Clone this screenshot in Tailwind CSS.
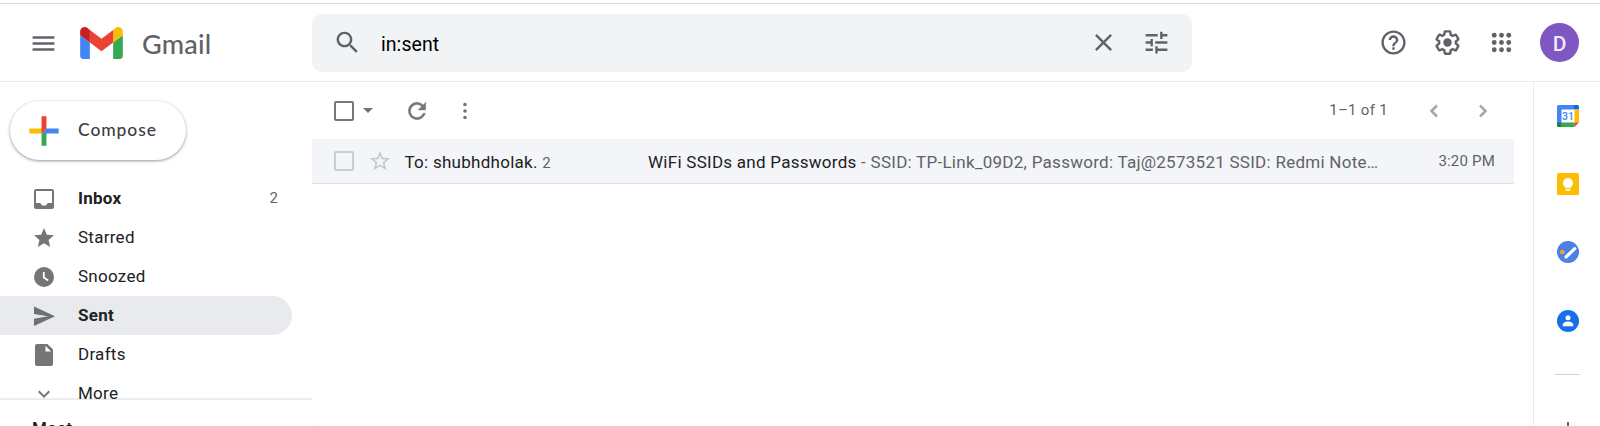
<!DOCTYPE html>
<html lang="en">
<head>
<meta charset="utf-8">
<title>Gmail</title>
<script src="https://cdn.jsdelivr.net/npm/@tailwindcss/browser@4"></script>
</head>
<body class="flex h-[426px] w-[1600px] flex-col overflow-hidden bg-white pt-[3px] font-['Roboto',sans-serif] text-[#202124]">
<header class="flex h-[79px] shrink-0 items-center border-t border-b border-t-[#d5d6d8] border-b-[#ececee]">
  <div class="flex w-[312px] items-center pt-px pl-[29px]">
    <svg class="size-[29px] text-[#5f6368]" viewBox="0 0 24 24" fill="currentColor"><path d="M3 18h18v-2H3v2zm0-5h18v-2H3v2zm0-7v2h18V6H3z"/></svg>
    <svg class="ml-[22px] h-[32px] w-[43px]" viewBox="52 42 88 66"><path fill="#4285f4" d="M58 108h14V74L52 59v43c0 3.32 2.69 6 6 6"/><path fill="#34a853" d="M120 108h14c3.32 0 6-2.69 6-6V59l-20 15"/><path fill="#fbbc04" d="M120 48v26l20-15v-8c0-7.42-8.47-11.65-14.4-7.2"/><path fill="#ea4335" d="M72 74V48l24 18 24-18v26L96 92"/><path fill="#c5221f" d="M52 51v8l20 15V48l-5.6-4.2c-5.94-4.45-14.4-.22-14.4 7.2"/></svg>
    <span class="ml-[19px] pt-px font-['Lato',sans-serif] text-[27px] font-medium leading-none tracking-[0.2px] text-[#5f6368]">Gmail</span>
  </div>
  <div class="flex h-[58px] w-[880px] items-center rounded-[10px] bg-[#f1f3f4] pl-[21px] pr-[21px] text-[#5f6368]">
    <svg class="size-[29px]" viewBox="0 0 24 24" fill="currentColor"><path d="M15.5 14h-.79l-.28-.27C15.41 12.59 16 11.11 16 9.5 16 5.91 13.09 3 9.5 3S3 5.91 3 9.5 5.91 16 9.5 16c1.61 0 3.09-.59 4.23-1.57l.27.28v.79l5 4.99L20.49 19l-4.99-5zm-6 0C7.01 14 5 11.99 5 9.5S7.01 5 9.5 5 14 7.01 14 9.5 11.99 14 9.5 14z"/></svg>
    <span class="ml-[19px] flex-1 pt-[4px] text-[19.5px] leading-none tracking-[0.05px] text-black">in:sent</span>
    <svg class="size-[29px]" viewBox="0 0 24 24" fill="currentColor"><path d="M19 6.41L17.59 5 12 10.59 6.41 5 5 6.41 10.59 12 5 17.59 6.41 19 12 13.41 17.59 19 19 17.59 13.41 12z"/></svg>
    <svg class="ml-[24px] size-[29px]" viewBox="0 0 24 24" fill="currentColor"><path d="M3 17v2h6v-2H3zM3 5v2h10V5H3zm10 16v-2h8v-2h-8v-2h-2v6h2zM7 9v2H3v2h4v2h2V9H7zm14 4v-2H11v2h10zm-6-4h2V7h4V5h-4V3h-2v6z"/></svg>
  </div>
  <div class="ml-auto flex items-center gap-[25px] pr-[21px] text-[#5f6368]">
    <svg class="size-[29px]" viewBox="0 0 24 24" fill="currentColor"><path d="M11 18h2v-2h-2v2zm1-16C6.48 2 2 6.48 2 12s4.48 10 10 10 10-4.48 10-10S17.52 2 12 2zm0 18c-4.41 0-8-3.59-8-8s3.59-8 8-8 8 3.59 8 8-3.59 8-8 8zm0-14c-2.21 0-4 1.79-4 4h2c0-1.1.9-2 2-2s2 .9 2 2c0 2-3 1.75-3 5h2c0-2.250 3-2.500 3-5 0-2.210-1.790-4-4-4z"/></svg>
    <svg class="size-[29px]" viewBox="0 0 24 24" fill="currentColor"><path d="M13.850 22.250h-3.700c-.740 0-1.360-.540-1.450-1.270l-.270-1.890c-.270-.140-.530-.290-.790-.460l-1.800.720c-.700.260-1.470-.030-1.810-.650L2.200 15.530c-.350-.660-.200-1.440.360-1.880l1.530-1.190c-.010-.150-.020-.300-.020-.460 0-.150.010-.310.020-.460l-1.520-1.190c-.590-.450-.740-1.260-.370-1.880l1.850-3.190c.340-.620 1.110-.900 1.790-.630l1.810.730c.260-.170.520-.320.780-.460l.270-1.910c.090-.700.710-1.250 1.440-1.250h3.700c.740 0 1.360.540 1.450 1.270l.270 1.890c.270.140.530.290.790.460l1.800-.720c.710-.260 1.480.030 1.820.650l1.840 3.180c.360.660.200 1.440-.360 1.880l-1.520 1.190c.010.150.020.300.020.460s-.010.310-.020.460l1.520 1.190c.560.450.720 1.230.370 1.860l-1.860 3.220c-.340.620-1.110.900-1.800.630l-1.800-.720c-.260.170-.520.320-.780.460l-.270 1.910c-.100.680-.720 1.220-1.460 1.220zm-3.230-2h2.760l.370-2.550.530-.220c.440-.180.880-.440 1.340-.780l.450-.340 2.380.960 1.380-2.400-2.030-1.580.070-.560c.030-.260.060-.510.060-.780s-.030-.530-.060-.780l-.070-.560 2.030-1.580-1.390-2.400-2.390.960-.450-.350c-.420-.320-.870-.580-1.330-.770l-.520-.220-.370-2.550h-2.760l-.370 2.550-.530.210c-.440.190-.880.440-1.340.790l-.450.330-2.380-.950-1.390 2.390 2.030 1.580-.070.560a7 7 0 0 0-.060.790c0 .260.020.530.060.780l.070.560-2.030 1.580 1.380 2.400 2.390-.960.450.350c.430.330.860.580 1.330.770l.530.220.380 2.550z"/><circle cx="12" cy="12" r="3.500"/></svg>
    <svg class="size-[29px]" viewBox="0 0 24 24" fill="currentColor"><circle cx="6" cy="6" r="2"/><circle cx="12" cy="6" r="2"/><circle cx="18" cy="6" r="2"/><circle cx="6" cy="12" r="2"/><circle cx="12" cy="12" r="2"/><circle cx="18" cy="12" r="2"/><circle cx="6" cy="18" r="2"/><circle cx="12" cy="18" r="2"/><circle cx="18" cy="18" r="2"/></svg>
    <div class="-ml-[1px] flex size-[39px] items-center justify-center rounded-full bg-[#7e57c2] pt-[3px] text-[21px] font-medium leading-none text-[#f0e8f8]">D</div>
  </div>
</header>

<div class="flex min-h-0 flex-1">
  <aside class="flex w-[312px] flex-col">
    <div class="pt-[19px] pl-[10px]">
      <button class="flex h-[59px] w-[176px] items-center rounded-full bg-white pl-[12px] shadow-[0_1px_2px_0_rgba(60,64,67,0.35),0_1px_3px_1px_rgba(60,64,67,0.16)]">
        <svg class="size-[44px]" viewBox="0 0 36 36"><path fill="#34A853" d="M16 16v14h4V20z"/><path fill="#4285F4" d="M30 16H20l-4 4h14z"/><path fill="#FBBC05" d="M6 16v4h10l4-4z"/><path fill="#EA4335" d="M20 16V6h-4v14z"/></svg>
        <span class="ml-[12px] pb-[2px] font-['Lato',sans-serif] text-[17.5px] font-medium leading-none tracking-[0.9px] text-[#3c4043]">Compose</span>
      </button>
    </div>
    <nav class="mt-[19px] h-[220px] shrink-0 overflow-hidden text-[17px] leading-none tracking-[0.27px]">
      <div class="flex h-[39px] items-center pr-[34px] pl-[32px] font-bold">
        <svg class="size-[24px] text-[#757575]" viewBox="0 0 24 24" fill="currentColor"><path fill-rule="evenodd" d="M4 2h16a2 2 0 0 1 2 2v16a2 2 0 0 1-2 2H4a2 2 0 0 1-2-2V4a2 2 0 0 1 2-2zm0 2v12h4.300a3.900 3.900 0 0 0 7.400 0H20V4z"/></svg>
        <span class="ml-[22px] flex-1">Inbox</span><span class="text-[15px] font-normal tracking-normal text-[#5f6368]">2</span>
      </div>
      <div class="flex h-[39px] items-center pl-[32px]">
        <svg class="size-[24px] text-[#757575]" viewBox="0 0 24 24" fill="currentColor"><path d="M12 17.270L18.180 21l-1.640-7.030L22 9.240l-7.190-.610L12 2 9.190 8.630 2 9.240l5.460 4.730L5.820 21z"/></svg>
        <span class="ml-[22px]">Starred</span>
      </div>
      <div class="flex h-[39px] items-center pl-[32px]">
        <svg class="size-[24px] text-[#757575]" viewBox="0 0 24 24"><circle cx="12" cy="12" r="10" fill="currentColor"/><path d="M11.800 7v5.500l4.400 3" fill="none" stroke="#fff" stroke-width="1.800"/></svg>
        <span class="ml-[22px]">Snoozed</span>
      </div>
      <div class="flex h-[39px] w-[292px] items-center rounded-r-full bg-[#e8eaed] pl-[32px] font-bold">
        <svg class="size-[24px] text-[#6f7072]" viewBox="0 0 24 24" fill="currentColor"><path d="M2 22l21-9.700L2 2.500v7.400l14 2.400-14 2.400z"/></svg>
        <span class="ml-[22px]">Sent</span>
      </div>
      <div class="flex h-[39px] items-center pl-[32px]">
        <svg class="size-[24px] text-[#757575]" viewBox="0 0 24 24" fill="currentColor"><path fill-rule="evenodd" d="M5 1h10.500L21 6.500V21a2 2 0 0 1-2 2H5a2 2 0 0 1-2-2V3a2 2 0 0 1 2-2zm8.500 1.800V8.500h5.500z"/></svg>
        <span class="ml-[22px]">Drafts</span>
      </div>
      <div class="flex h-[39px] items-center pl-[32px]">
        <svg class="size-[24px] text-[#757575]" viewBox="0 0 24 24" fill="currentColor"><path d="M16.590 8.590L12 13.170 7.410 8.590 6 10l6 6 6-6z"/></svg>
        <span class="ml-[22px]">More</span>
      </div>
    </nav>
    <section class="h-[40px] shrink-0 border-t border-[#e9eaeb] pt-[20px] pl-[32px] text-[17px] font-medium leading-none tracking-[0.5px] shadow-[0_-1px_1px_rgba(60,64,67,0.08)]">Meet</section>
  </aside>

  <main class="w-[1221px]">
    <div class="flex h-[57px] items-center pl-[22px] text-[#757575]">
      <span class="size-[20px] rounded-[2px] border-2 border-[#777]"></span>
      <svg class="ml-[9px] h-[5px] w-[10px]" viewBox="0 0 10 5" fill="currentColor"><path d="M0 0h10L5 5z"/></svg>
      <svg class="ml-[31px] size-[26px]" viewBox="0 0 24 24" fill="currentColor" stroke="currentColor" stroke-width=".4"><path d="M17.650 6.350A7.960 7.960 0 0 0 12 4a8 8 0 1 0 7.730 10h-2.080A6 6 0 1 1 12 6c1.660 0 3.140.690 4.220 1.780L13 11h7V4z"/></svg>
      <svg class="ml-[18px] size-[24px]" viewBox="0 0 24 24" fill="currentColor"><circle cx="17" cy="5.500" r="1.800"/><circle cx="17" cy="12" r="1.800"/><circle cx="17" cy="18.500" r="1.800"/></svg>
      <span class="ml-auto text-[15px] leading-none tracking-[0.3px] text-[#5f6368]">1–1 of 1</span>
      <svg class="ml-[34px] size-[24px] text-[#a8a8a8]" viewBox="0 0 24 24" fill="none" stroke="currentColor" stroke-width="2.600"><path d="M15 6.500L9.500 12l5.500 5.500"/></svg>
      <svg class="mr-[38px] ml-[25px] size-[24px] text-[#a8a8a8]" viewBox="0 0 24 24" fill="none" stroke="currentColor" stroke-width="2.600"><path d="M9 6.500l5.500 5.500L9 17.500"/></svg>
    </div>
    <div class="flex h-[45px] w-[1202px] items-center border-b border-[#dfe2e5] bg-[#f4f5f8] pr-[19px] pl-[22px] text-[17px] leading-none">
      <span class="size-[20px] shrink-0 rounded-[2px] border-2 border-[#cbcccf]"></span>
      <svg class="ml-[14px] size-[24px] shrink-0 text-[#c6c8ca]" viewBox="0 0 24 24" fill="currentColor"><path d="M22 9.240l-7.190-.620L12 2 9.190 8.630 2 9.240l5.460 4.730L5.820 21 12 17.270 18.180 21l-1.630-7.030zM12 15.400l-3.760 2.270 1-4.280-3.320-2.880 4.380-.380L12 6.100l1.710 4.040 4.380.380-3.320 2.880 1 4.280z"/></svg>
      <div class="ml-[12.500px] w-[243.500px] shrink-0 pt-[2px] whitespace-nowrap tracking-[0.27px]">To: shubhdholak. <span class="text-[15px] text-[#5f6368]">2</span></div>
      <div class="flex-1 pt-[2px] whitespace-nowrap tracking-[0.265px] text-[#5f6368]"><span class="text-[#202124]">WiFi SSIDs and Passwords</span> - SSID: TP-Link_09D2, Password: Taj@2573521 SSID: Redmi Note…</div>
      <div class="pt-px text-[15px] whitespace-nowrap tracking-[0.2px] text-[#5f6368]">3:20 PM</div>
    </div>
  </main>

  <aside class="flex w-[67px] flex-col items-center border-l border-[#ececee] pt-[23px] pl-px">
    <svg class="h-[22px] w-[22px] shrink-0" viewBox="0 0 22 22"><path fill="#fff" d="M4 4h14v14H4z"/><path fill="#4285f4" d="M1.500 0H17v4.500H4.500V22H4l-4-4V1.500A1.500 1.500 0 0 1 1.500 0z"/><path fill="#1967d2" d="M17 0h3.500A1.500 1.500 0 0 1 22 1.500V4.500h-5z"/><path fill="#fbbc04" d="M17.500 4.500H22V17.500h-4.500z"/><path fill="#34a853" d="M4.500 17.500h13V22h-13z"/><path fill="#188038" d="M0 17.500h4.500V22h-3A1.500 1.500 0 0 1 0 20.500z"/><path fill="#ea4335" d="M17.500 17.500H22L17.500 22z"/><text x="11" y="14.800" text-anchor="middle" font-family="Roboto" font-size="10.500" font-weight="500" fill="#4285f4">31</text></svg>
    <svg class="mt-[46px] size-[22px] shrink-0" viewBox="0 0 22 22"><rect width="22" height="22" rx="1.500" fill="#fbbc04"/><path fill="#fff" d="M11 5a5 5 0 0 0-2.800 9.100V15h5.600v-.900A5 5 0 0 0 11 5zM8.500 16h5v1.700h-5z"/></svg>
    <svg class="mt-[46px] size-[22px] shrink-0" viewBox="0 0 22 22"><circle cx="11" cy="11" r="11" fill="#4a80e8"/><path d="M9 16l8.800-8.400" stroke="#fff" stroke-width="3.200" stroke-linecap="round"/><circle cx="5.300" cy="11" r="2.300" fill="#f5a623"/></svg>
    <svg class="mt-[47px] size-[22px] shrink-0" viewBox="0 0 22 22"><circle cx="11" cy="11" r="11" fill="#1a6fe6"/><circle cx="11" cy="7.700" r="2.500" fill="#fff"/><path fill="#fff" d="M5.800 16.200v-1.400c0-2 3-3.200 5.200-3.200s5.200 1.200 5.200 3.200v1.400z"/></svg>
    <div class="mt-[42px] h-px w-[25px] shrink-0 bg-[#d3d4d6]"></div>
    <svg class="mt-[47px] size-[16px] shrink-0" viewBox="0 0 16 16" fill="#5f6368"><path d="M7 0h2v7h7v2H9v7H7V9H0V7h7z"/></svg>
  </aside>
</div>
</body>
</html>
